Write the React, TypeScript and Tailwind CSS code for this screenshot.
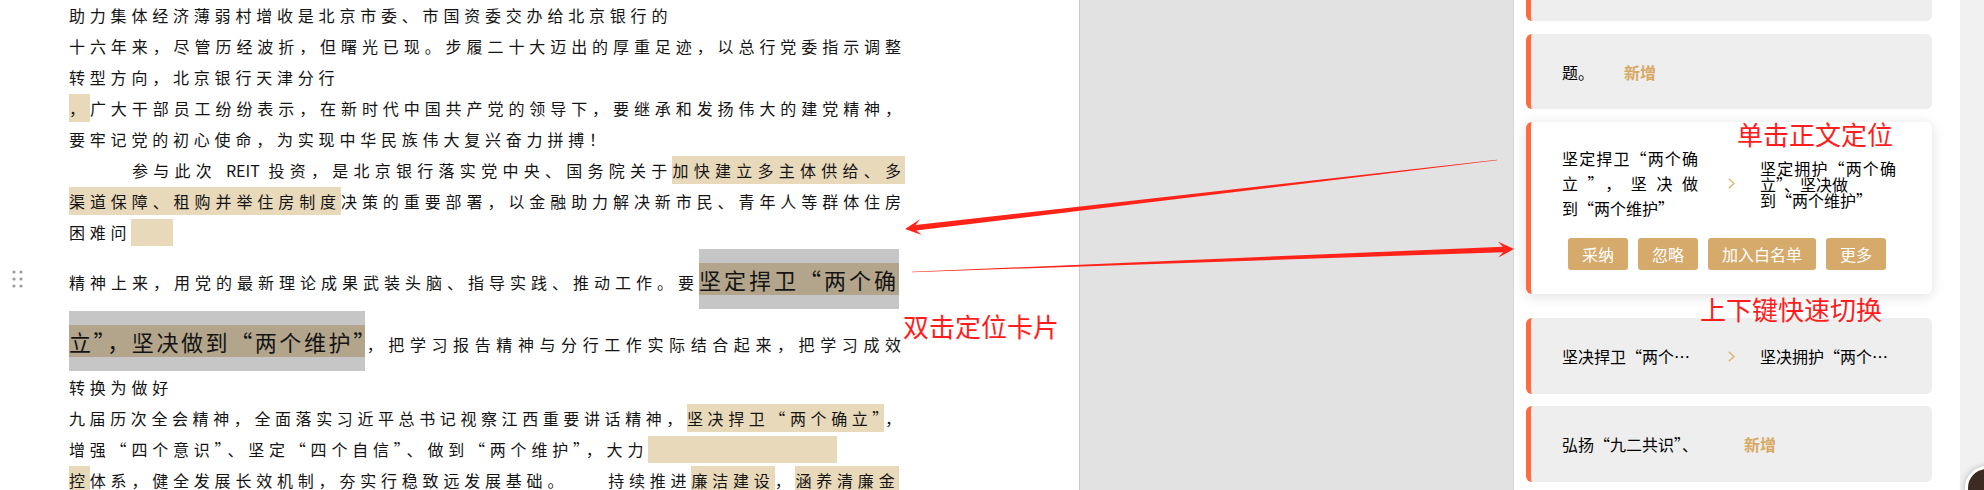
import type { ReactNode } from "react";
import clsx from "clsx";

const HL = "bg-[#e8d9ba] py-[2px]";
const CARD = "rounded-[6px] border-l-[5px] border-[#ff6a3f]";

function Line({
  justify,
  className,
  children,
}: {
  justify?: boolean;
  className?: string;
  children: ReactNode;
}) {
  return (
    <div
      className={clsx(
        justify
          ? "text-justify [text-align-last:justify] tracking-[4px]"
          : "whitespace-nowrap",
        className
      )}
    >
      {children}
    </div>
  );
}

function Chevron({ className }: { className?: string }) {
  return (
    <svg className={clsx("shrink-0", className)} width="7" height="11" viewBox="0 0 7 11">
      <polyline points="0.8,0.8 6,5.5 0.8,10.2" fill="none" stroke="#dcb06f" strokeWidth="1.3" />
    </svg>
  );
}

// tapered red arrow, thin at the tail and thick at the head
function arrowPath(tail: [number, number], tip: [number, number], w0: number, w1: number) {
  const dx = tip[0] - tail[0];
  const dy = tip[1] - tail[1];
  const len = Math.hypot(dx, dy);
  const ux = dx / len;
  const uy = dy / len;
  const nx = -uy;
  const ny = ux;
  const L = 16;
  const hw = 8;
  const notch = 11;
  const p = (d: number, s: number) =>
    `${(tip[0] - ux * d + nx * s).toFixed(1)},${(tip[1] - uy * d + ny * s).toFixed(1)}`;
  const t = (s: number) => `${(tail[0] + nx * s).toFixed(1)},${(tail[1] + ny * s).toFixed(1)}`;
  return `M${t(w0 / 2)} L${p(notch, w1 / 2)} L${p(L, hw)} L${p(0, 0)} L${p(L, -hw)} L${p(notch, -w1 / 2)} L${t(-w0 / 2)} Z`;
}

function Button({ children }: { children: ReactNode }) {
  return (
    <div className="h-[32px] rounded-[3px] bg-[#d5aa6b] px-[14px] text-[16px] leading-[32px] text-white">
      {children}
    </div>
  );
}

export default function App() {
  return (
    <div className="relative flex h-[490px] w-[1984px] overflow-hidden bg-white font-['Noto_Sans_CJK_SC','Noto_Sans',sans-serif]">
      {/* document */}
      <div className="w-[1080px] shrink-0 border-r border-[#c9c9c9] bg-white pl-[69px] text-[16px] leading-[31px] tracking-[4.8px] text-[#141414]">
        <div className="w-[836px]">
          <Line>助力集体经济薄弱村增收是北京市委、市国资委交办给北京银行的</Line>
          <Line justify>十六年来，尽管历经波折，但曙光已现。步履二十大迈出的厚重足迹，以总行党委指示调整</Line>
          <Line>转型方向，北京银行天津分行</Line>
          <Line justify>
            <span className={HL}>，</span>广大干部员工纷纷表示，在新时代中国共产党的领导下，要继承和发扬伟大的建党精神，
          </Line>
          <Line>要牢记党的初心使命，为实现中华民族伟大复兴奋力拼搏！</Line>
          <Line justify className="indent-[63px]">
            参与此次 <span className="tracking-normal">REIT</span> 投资，是北京银行落实党中央、国务院关于
            <span className={HL}>加快建立多主体供给、多</span>
          </Line>
          <Line justify>
            <span className={HL}>渠道保障、租购并举住房制度</span>决策的重要部署，以金融助力解决新市民、青年人等群体住房
          </Line>
          <Line>
            困难问<span className="inline-block h-[27px] w-[42px] bg-[#e8d9ba] align-[-7px]" />
          </Line>
          <Line className="relative tracking-[5px]">
            <svg className="absolute left-[-58px] top-[21px]" width="13" height="20" viewBox="0 0 13 20">
              {[3, 10].map((x) =>
                [3, 10, 17].map((y) => <circle key={`${x}-${y}`} cx={x} cy={y} r="1.6" fill="#9c9c9c" />)
              )}
            </svg>
            精神上来，用党的最新理论成果武装头脑、指导实践、推动工作。要
            <span className="bg-[#c6c6c6] py-[14px] text-[22px] leading-[62px] tracking-[3px]">
              <span className="bg-[#b3a58b]">坚定捍卫“两个确</span>
            </span>
          </Line>
          <Line justify>
            <span className="bg-[#c6c6c6] py-[14px] text-[22px] leading-[62px] tracking-[1px]">
              <span className="bg-[#b3a58b]">立”，坚决做到“两个维护”</span>
            </span>
            ，把学习报告精神与分行工作实际结合起来，把学习成效
          </Line>
          <Line>转换为做好</Line>
          <Line justify>
            九届历次全会精神，全面落实习近平总书记视察江西重要讲话精神，<span className={HL}>坚决捍卫“两个确立”</span>，
          </Line>
          <Line>
            增强“四个意识”、坚定“四个自信”、做到“两个维护”，大力
            <span className="inline-block h-[27px] w-[189px] bg-[#e8d9ba] align-[-7px]" />
          </Line>
          <Line>
            <span className={HL}>控</span>体系，健全发展长效机制，夯实行稳致远发展基础。
            <span className="inline-block w-[40px]" />
            持续推进<span className={HL}>廉洁建设</span>，<span className={HL}>涵养清廉金</span>
          </Line>
        </div>
      </div>

      {/* gap between document and panel */}
      <div className="w-[434px] shrink-0 border-r border-[#d6d6d6] bg-[#e2e2e2]" />

      {/* review panel */}
      <div className="w-[446px] shrink-0 overflow-hidden bg-white">
        <div className="ml-[12px] flex w-[406px] flex-col text-[16px] text-black">
          <div className={clsx(CARD, "mt-[-54px] h-[75px] bg-[#eeeeee]")} />

          <div className={clsx(CARD, "mt-[13px] flex h-[75px] items-center bg-[#eeeeee] pl-[31px]")}>
            <span>题。</span>
            <span className="ml-[30px] font-bold text-[#d8a864]">新增</span>
          </div>

          <div
            className={clsx(
              CARD,
              "mt-[13px] h-[172px] bg-white pl-[31px] pt-[24px] shadow-[0_2px_14px_rgba(0,0,0,0.13)]"
            )}
          >
            <div className="flex items-center">
              <div className="w-[136px] leading-[25px]">
                <div className="text-justify [text-align-last:justify]">坚定捍卫“两个确</div>
                <div className="text-justify [text-align-last:justify]">立”，坚决做</div>
                <div>到“两个维护”</div>
              </div>
              <Chevron className="ml-[30px]" />
              <div className="ml-[25px] w-[136px] leading-[16px]">
                <div className="text-justify [text-align-last:justify]">坚定拥护“两个确</div>
                <div>立”、坚决做</div>
                <div>到“两个维护”</div>
              </div>
            </div>
            <div className="ml-[6px] mt-[17px] flex gap-[10px]">
              <Button>采纳</Button>
              <Button>忽略</Button>
              <Button>加入白名单</Button>
              <Button>更多</Button>
            </div>
          </div>

          <div className={clsx(CARD, "mt-[24px] flex h-[76px] items-center bg-[#eeeeee] pl-[31px]")}>
            <div className="w-[136px] truncate">坚决捍卫“两个确立”</div>
            <Chevron className="ml-[30px]" />
            <div className="ml-[25px] w-[136px] truncate">坚决拥护“两个确立”</div>
          </div>

          <div className={clsx(CARD, "mt-[12px] flex h-[76px] items-center bg-[#eeeeee] pl-[31px]")}>
            <span>弘扬“九二共识”、</span>
            <span className="ml-[46px] font-bold text-[#d8a864]">新增</span>
          </div>
        </div>
      </div>

      <div className="flex-1 bg-[#f1f1f1]" />

      {/* annotations */}
      <svg className="pointer-events-none absolute left-0 top-0" width="1984" height="490">
        <path d={arrowPath([1497, 160], [905, 229], 0.5, 5.5)} fill="#ff2319" />
        <path d={arrowPath([912, 272], [1514, 249], 0.5, 5.5)} fill="#ff2319" />
      </svg>
      <div className="absolute left-[1737px] top-[121px] text-[26px] leading-none text-[#ff1d1d]">单击正文定位</div>
      <div className="absolute left-[1700px] top-[296px] text-[26px] leading-none text-[#ff1d1d]">上下键快速切换</div>
      <div className="absolute left-[903px] top-[313px] text-[26px] leading-none text-[#ff1d1d]">双击定位卡片</div>

      <div className="absolute left-[1965px] top-[466px] h-[44px] w-[44px] rounded-full border-[3px] border-white bg-[#3b2b22] shadow-[0_0_6px_rgba(0,0,0,0.25)]" />
    </div>
  );
}
